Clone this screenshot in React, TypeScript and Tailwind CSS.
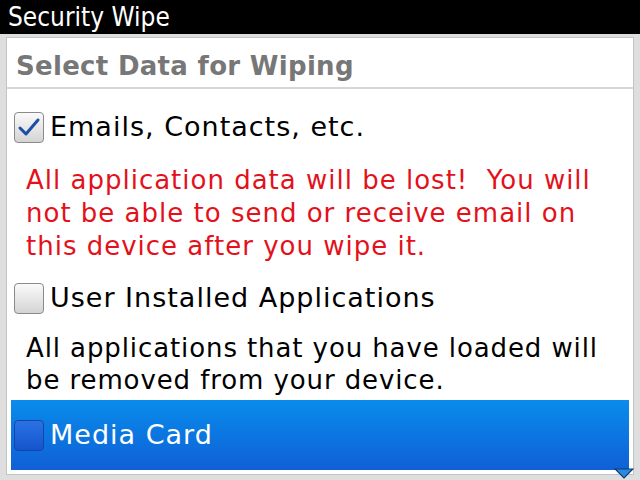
import React from 'react';

function Check({ checked, selected }: { checked?: boolean; selected?: boolean }) {
  if (selected) {
    return (
      <div className="w-[30px] h-[31px] rounded-[4px] border border-[#1446a8] bg-gradient-to-b from-[#2a72e4] to-[#1654cc] shrink-0" />
    );
  }
  return (
    <div className="w-[30px] h-[31px] rounded-[4px] border border-[#8a8a8a] bg-gradient-to-b from-[#fafafa] to-[#d4d4d4] shrink-0 flex items-center justify-center">
      {checked && (
        <svg width="24" height="22" viewBox="0 0 24 22">
          <path d="M3 12 L9 18 L21 4" fill="none" stroke="#1a4ea8" strokeWidth="3" strokeLinecap="round" strokeLinejoin="round" />
        </svg>
      )}
    </div>
  );
}

export default function App() {
  return (
    <div className="w-[640px] h-[480px] bg-[#dedede] flex flex-col overflow-hidden" style={{ fontFamily: '"DejaVu Sans", sans-serif' }}>
      <div className="h-[34px] bg-black text-white text-[26px] leading-[34px] pl-[8px] shrink-0" style={{ fontFamily: '"DejaVu Sans Condensed", "DejaVu Sans", sans-serif' }}>
        Security Wipe
      </div>
      <div className="flex-1 px-[6px] pt-[3px] pb-[5px] flex">
        <div className="flex-1 bg-white border border-[#c4c4c4] relative flex flex-col">
          <div className="h-[51px] shrink-0 border-b-2 border-[#d6d6d6] pl-[9px] pt-[7px] flex items-center text-[#777] font-bold text-[26px] tracking-[0.3px]">
            Select Data for Wiping
          </div>
          <div className="flex items-center gap-[6px] pl-[7px] mt-[22px] h-[32px] shrink-0">
            <Check checked />
            <span className="text-[27px] tracking-[1px] text-black">Emails, Contacts, etc.</span>
          </div>
          <div className="pl-[19px] mt-[21px] text-[26px] tracking-[1px] leading-[33px] text-[#e3111b] whitespace-nowrap">
            All application data will be lost!&nbsp; You will<br />
            not be able to send or receive email on<br />
            this device after you wipe it.
          </div>
          <div className="flex items-center gap-[6px] pl-[7px] mt-[19px] h-[32px] shrink-0">
            <Check />
            <span className="text-[27px] tracking-[1px] text-black">User Installed Applications</span>
          </div>
          <div className="pl-[19px] mt-[18px] text-[26px] tracking-[0.9px] leading-[32px] text-black whitespace-nowrap">
            All applications that you have loaded will<br />
            be removed from your device.
          </div>
          <div className="mt-[4px] mx-[4px] h-[70px] shrink-0 bg-gradient-to-b from-[#0a8ceb] to-[#115fd6] flex items-center gap-[6px] pl-[3px]">
            <Check selected />
            <span className="text-[27px] tracking-[1px] text-white">Media Card</span>
          </div>
          <svg className="absolute right-[-1px] bottom-[-5px]" width="20" height="11" viewBox="0 0 20 11">
            <path d="M1 1 L19 1 L10 10 Z" fill="#2a8ae0" stroke="#0d3b70" strokeWidth="1.2" />
          </svg>
        </div>
      </div>
    </div>
  );
}
